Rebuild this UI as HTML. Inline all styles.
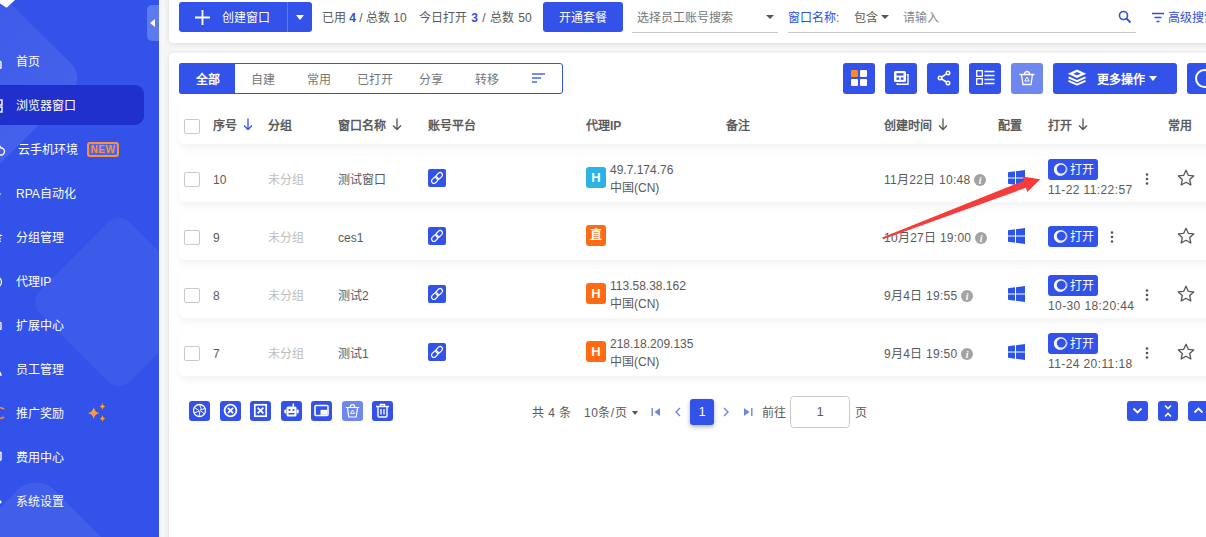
<!DOCTYPE html>
<html lang="zh-CN">
<head>
<meta charset="utf-8">
<title>浏览器窗口</title>
<style>
*{box-sizing:border-box;margin:0;padding:0}
html,body{width:1206px;height:537px;overflow:hidden}
body{font-family:"Liberation Sans",sans-serif;font-size:12px;color:#5a5a5a;background:#f5f5f5;position:relative}
.abs{position:absolute}
.t{position:absolute;white-space:nowrap;line-height:16px}
/* sidebar */
#side{position:absolute;left:0;top:0;width:159px;height:537px;background:#3252e9;overflow:hidden}
#side .shape{position:absolute;background:rgba(255,255,255,.07);border-radius:14px;transform:rotate(45deg)}
#side .act{position:absolute;left:-10px;top:85px;width:154px;height:40px;background:#1f30cc;border-radius:9px}
#side .mi{position:absolute;left:16px;color:#fff;font-size:12px;line-height:16px;white-space:nowrap}
#side .sic{position:absolute;left:-3px;overflow:hidden}
#handle{position:absolute;left:147px;top:5px;width:12px;height:36px;background:#5f79ee;border-radius:5px 0 0 5px}
#handle:after{content:"";position:absolute;left:3px;top:14px;border:4px solid transparent;border-right:5px solid #fff;border-left:0}
.new{position:absolute;left:87px;top:142px;width:32px;height:15px;border:2px solid #ff8f35;border-radius:3px;color:#ff8f35;font-size:10px;font-weight:bold;line-height:11px;text-align:center;letter-spacing:.5px;background:rgba(255,255,255,.12)}
/* cards */
.card{position:absolute;background:#fff;border-radius:4px;box-shadow:0 1px 5px rgba(0,0,0,.10)}
.btn{position:absolute;background:#3252e9;border-radius:3px;color:#fff}
.blue{color:#2f4fe0}
.row{position:absolute;left:179px;width:1040px;height:48px;background:#fff;border-radius:6px;box-shadow:0 4px 9px rgba(0,0,0,.05)}
.cb{position:absolute;left:184px;width:16px;height:15px;margin-top:1px;border:1px solid #c9c9c9;border-radius:2px;background:#fff}
.gray{color:#bdbdbd}
.hd{font-weight:bold;color:#5c5c5c}
.ts{letter-spacing:.4px}
.dt{letter-spacing:.27px}
</style>
</head>
<body>
<!-- SIDEBAR -->
<div id="side">
  <div class="shape" style="left:-156px;top:-22px;width:200px;height:200px;border-radius:20px;background:linear-gradient(270deg,rgba(255,255,255,.09),rgba(255,255,255,.03))"></div>
  <div class="shape" style="left:55px;top:238px;width:128px;height:128px;border-radius:16px;background:rgba(255,255,255,.055)"></div>
  <div class="shape" style="left:-64px;top:513px;width:200px;height:200px;border-radius:26px;background:rgba(255,255,255,.07)"></div>
  <svg style="position:absolute;left:0;top:0" width="20" height="10" viewBox="0 0 20 10"><path d="M0 0h15L7.500 7Q6.500 8 5.500 7L0 3.500z" fill="#fff"/></svg>
  <div class="act"></div>

  <svg class="sic" style="top:55px" width="8" height="14" viewBox="0 0 8 14"><path d="M-4 1l8 6v6h-8" stroke="#fff" stroke-width="1.400" fill="none"/></svg>
  <svg class="sic" style="top:99px" width="8" height="14" viewBox="0 0 8 14"><rect x="-4" y="1" width="9" height="5" stroke="#fff" stroke-width="1.400" fill="none"/><rect x="-4" y="8" width="9" height="5" stroke="#fff" stroke-width="1.400" fill="none"/></svg>
  <svg class="sic" style="top:143px" width="10" height="14" viewBox="0 0 10 14"><path d="M-4 12h8a3.500 3.500 0 0 0 0-7a5 5 0 0 0-4-3.500" stroke="#fff" stroke-width="1.300" fill="none"/></svg>
  <svg class="sic" style="top:187px" width="8" height="14" viewBox="0 0 8 14"><path d="M-2 3h4v2.500a1.600 1.600 0 0 1 0 3.200v2.500h-6z" fill="#fff"/></svg>
  <svg class="sic" style="top:231px" width="8" height="14" viewBox="0 0 8 14"><path d="M-3 2l7 2.500-7 2.500M4 7.500l-7 2.500M4 10l-7 2.500" stroke="#fff" stroke-width="1.300" fill="none"/></svg>
  <svg class="sic" style="top:275px" width="8" height="14" viewBox="0 0 8 14"><circle cx="-1" cy="7" r="5.500" stroke="#fff" stroke-width="1.300" fill="none"/></svg>
  <svg class="sic" style="top:319px" width="8" height="14" viewBox="0 0 8 14"><path d="M-2 1l6 3v6l-6 3" stroke="#fff" stroke-width="1.300" fill="none"/></svg>
  <svg class="sic" style="top:363px" width="8" height="14" viewBox="0 0 8 14"><path d="M-1 8c3 0 5 2 5 5" stroke="#fff" stroke-width="1.400" fill="none"/></svg>
  <svg class="sic" style="top:406px" width="8" height="14" viewBox="0 0 8 14"><path d="M7 3.200a5.200 5.200 0 1 0 0 7.600" stroke="#ff8a3a" stroke-width="1.800" fill="none"/></svg>
  <svg class="sic" style="top:451px" width="8" height="14" viewBox="0 0 8 14"><path d="M-3 1.500h7v7l-4 3.500h-3" stroke="#fff" stroke-width="1.400" fill="none"/></svg>
  <svg class="sic" style="top:495px" width="8" height="14" viewBox="0 0 8 14"><path d="M-2 1l6 6-6 6" stroke="#fff" stroke-width="1.400" fill="none"/></svg>
  <svg style="position:absolute;left:86px;top:402px" width="22" height="22" viewBox="0 0 20 20"><path d="M7 4.500Q7.800 9.300 12.500 10Q7.800 10.700 7 15.500Q6.200 10.700 1.500 10Q6.200 9.300 7 4.500zM15 0.800Q15.400 3.600 18 4Q15.400 4.400 15 7.200Q14.600 4.400 12 4Q14.600 3.600 15 0.800zM15 12Q15.400 14.600 17.800 15Q15.400 15.400 15 18Q14.600 15.400 12.200 15Q14.600 14.600 15 12z" fill="#ff9a3c"/></svg>
  <div class="mi" style="top:54px">首页</div>
  <div class="mi" style="top:98px">浏览器窗口</div>
  <div class="mi" style="top:142px;left:18px">云手机环境</div>
  <div class="new">NEW</div>
  <div class="mi" style="top:186px">RPA自动化</div>
  <div class="mi" style="top:230px">分组管理</div>
  <div class="mi" style="top:274px">代理IP</div>
  <div class="mi" style="top:318px">扩展中心</div>
  <div class="mi" style="top:362px">员工管理</div>
  <div class="mi" style="top:406px">推广奖励</div>
  <div class="mi" style="top:450px">费用中心</div>
  <div class="mi" style="top:494px">系统设置</div>
</div>
<div id="handle"></div>

<!-- TOP BAR -->
<div class="card" style="left:169px;top:-10px;width:1060px;height:53px"></div>
<div class="btn" style="left:179px;top:2px;width:133px;height:30px"></div>
<div class="abs" style="left:287px;top:2px;width:1px;height:30px;background:#5d77ee"></div>
<svg class="abs" style="left:194px;top:9px" width="17" height="17" viewBox="0 0 17 17"><path d="M8.5 1v15M1 8.500h15" stroke="#fff" stroke-width="1.8" fill="none"/></svg>
<div class="t" style="left:222px;top:10px;color:#fff;font-size:12px">创建窗口</div>
<div class="abs" style="left:296px;top:15px;border:4px solid transparent;border-top:5px solid #fff;border-bottom:0"></div>
<div class="t" style="left:322px;top:10px;font-size:12px">已用 <b class="blue">4</b> / 总数 10</div>
<div class="t" style="left:419px;top:10px;font-size:12px;word-spacing:1px">今日打开 <b class="blue">3</b> / 总数 50</div>
<div class="btn" style="left:543px;top:2px;width:80px;height:30px"></div>
<div class="t" style="left:559px;top:10px;color:#fff;font-size:12px">开通套餐</div>
<div class="t" style="left:637px;top:10px;font-size:12px;color:#777">选择员工账号搜索</div>
<div class="abs" style="left:766px;top:15px;border:4px solid transparent;border-top:4px solid #555;border-bottom:0"></div>
<div class="abs" style="left:632px;top:32px;width:146px;height:1px;background:#c8c8c8"></div>
<div class="t blue" style="left:788px;top:10px;font-size:12px">窗口名称:</div>
<div class="t" style="left:854px;top:10px;font-size:12px">包含</div>
<div class="abs" style="left:881px;top:15px;border:4px solid transparent;border-top:4px solid #555;border-bottom:0"></div>
<div class="t" style="left:903px;top:10px;font-size:12px;color:#888">请输入</div>
<div class="abs" style="left:788px;top:32px;width:348px;height:1px;background:#c8c8c8"></div>
<svg class="abs" style="left:1117px;top:9px" width="16" height="16" viewBox="0 0 16 16"><circle cx="6.500" cy="6.500" r="4" stroke="#2f4fe0" stroke-width="1.600" fill="none"/><path d="M9.500 9.500l4 4" stroke="#2f4fe0" stroke-width="1.800"/></svg>
<svg class="abs" style="left:1152px;top:12px" width="14" height="12" viewBox="0 0 14 12"><path d="M0 1.500h12M2.500 5.500h7M4.500 9.500h3" stroke="#2f4fe0" stroke-width="1.400"/></svg>
<div class="t blue" style="left:1168px;top:10px;font-size:12px">高级搜索</div>

<!-- MAIN CARD -->
<div class="card" style="left:169px;top:53px;width:1060px;height:500px"></div>
<!-- tabs -->
<div class="abs" style="left:179px;top:63px;width:384px;height:31px;border:1px solid #3252e9;border-radius:3px;background:#fff"></div>
<div class="abs" style="left:179px;top:63px;width:56px;height:31px;background:#3252e9;border-radius:3px 0 0 3px"></div>
<div class="t" style="left:195.500px;top:72px;color:#fff;font-weight:bold">全部</div>
<div class="t" style="left:251px;top:72px;color:#777">自建</div>
<div class="t" style="left:307px;top:72px;color:#777">常用</div>
<div class="t" style="left:357px;top:72px;color:#777">已打开</div>
<div class="t" style="left:419px;top:72px;color:#777">分享</div>
<div class="t" style="left:475px;top:72px;color:#777">转移</div>
<svg class="abs" style="left:532px;top:73px" width="14" height="11" viewBox="0 0 14 11"><path d="M0 1h13M0 5h9M0 9h5" stroke="#4a67ec" stroke-width="1.500"/></svg>
<!-- toolbar buttons -->
<div class="btn" style="left:843px;top:63px;width:32px;height:31px"></div>
<svg class="abs" style="left:851px;top:70px" width="16" height="16" viewBox="0 0 16 16"><rect x="0" y="0" width="7" height="7" rx="1" fill="#ff8a1f"/><rect x="9" y="0" width="7" height="7" rx="1" fill="#fff"/><rect x="0" y="9" width="7" height="7" rx="1" fill="#fff"/><rect x="9" y="9" width="7" height="7" rx="1" fill="#fff"/></svg>
<div class="btn" style="left:885px;top:63px;width:32px;height:31px"></div>
<svg class="abs" style="left:894px;top:71px" width="16" height="15" viewBox="0 0 16 15"><rect x="0" y="0" width="12" height="11" rx="1.600" fill="#fff"/><rect x="2.500" y="2.200" width="7" height="2.400" fill="#3252e9"/><rect x="2.500" y="6.500" width="2.700" height="2.300" fill="#3252e9"/><rect x="6.800" y="6.500" width="2.700" height="2.300" fill="#3252e9"/><path d="M12.500 3.600h1.500v9.700h-10.800v-1.300" stroke="#fff" stroke-width="1.400" fill="none"/></svg>
<div class="btn" style="left:927px;top:63px;width:32px;height:31px"></div>
<svg class="abs" style="left:937px;top:70px" width="15" height="16" viewBox="0 0 15 16"><path d="M11 3L3 8l8 5" stroke="#fff" stroke-width="1.600" fill="none"/><circle cx="11" cy="3" r="2.500" fill="#fff"/><circle cx="3" cy="8" r="2.500" fill="#fff"/><circle cx="11" cy="13" r="2.500" fill="#fff"/><circle cx="11" cy="3" r="0.900" fill="#3252e9"/><circle cx="3" cy="8" r="0.900" fill="#3252e9"/><circle cx="11" cy="13" r="0.900" fill="#3252e9"/></svg>
<div class="btn" style="left:969px;top:63px;width:32px;height:31px"></div>
<svg class="abs" style="left:976px;top:70px" width="19" height="16" viewBox="0 0 19 16"><rect x="0.700" y="0.700" width="5.600" height="5.600" stroke="#fff" stroke-width="1.300" fill="none"/><rect x="0.700" y="8.700" width="5.600" height="5.600" stroke="#fff" stroke-width="1.300" fill="none"/><path d="M8.500 1.500h10M8.500 5.500h10M8.500 9.500h10M8.500 13.500h10" stroke="#fff" stroke-width="1.300"/></svg>
<div class="btn" style="left:1011px;top:63px;width:32px;height:31px;background:#6f88ef"></div>
<svg class="abs" style="left:1019px;top:70px" width="16" height="16" viewBox="0 0 16 16"><path d="M0.500 4.500h15M2.500 4.500l1.500 10h8l1.500-10M5.500 4.200c0-3.600 5-3.600 5 0" stroke="#fff" stroke-width="1.300" fill="none"/><path d="M8 7l2.200 4h-4.400z" stroke="#fff" stroke-width="1" fill="none"/></svg>
<div class="btn" style="left:1053px;top:63px;width:124px;height:31px"></div>
<svg class="abs" style="left:1067px;top:69px" width="20" height="17" viewBox="0 0 20 17"><path fill-rule="evenodd" d="M10 0.500L0.800 4.700 10 8.900 19.200 4.700zM10 3.100L13.800 4.700 10 6.300 6.200 4.700z" fill="#fff"/><path d="M1.500 8.300L10 12.100 18.500 8.300M1.500 11.800L10 15.600 18.500 11.800" stroke="#fff" stroke-width="2" fill="none" stroke-linejoin="round"/></svg>
<div class="t" style="left:1097px;top:72px;color:#fff;font-size:12px;font-weight:bold;letter-spacing:-.15px">更多操作</div>
<div class="abs" style="left:1149px;top:76px;border:4px solid transparent;border-top:5px solid #fff;border-bottom:0"></div>
<div class="btn" style="left:1187px;top:63px;width:40px;height:31px"></div>
<div class="abs" style="left:1195px;top:69px;width:19px;height:19px;border:2px solid #fff;border-radius:50%"></div>

<!--TABLE_S-->
<div class="row" style="top:104px;height:40px"></div>
<div class="cb" style="top:118px"></div>
<div class="t hd" style="left:213px;top:118px">序号</div>
<div class="t hd" style="left:268px;top:118px">分组</div>
<div class="t hd" style="left:338px;top:118px">窗口名称</div>
<div class="t hd" style="left:428px;top:118px">账号平台</div>
<div class="t hd" style="left:586px;top:118px">代理IP</div>
<div class="t hd" style="left:726px;top:118px">备注</div>
<div class="t hd" style="left:884px;top:118px">创建时间</div>
<div class="t hd" style="left:998px;top:118px">配置</div>
<div class="t hd" style="left:1048px;top:118px">打开</div>
<div class="t hd" style="left:1168px;top:118px">常用</div>
<svg class="abs" style="left:243px;top:118px" width="10" height="13" viewBox="0 0 10 13"><path d="M5 0.500v11M1 7.500l4 4 4-4" stroke="#3252e9" stroke-width="1.300" fill="none"/></svg>
<svg class="abs" style="left:392px;top:118px" width="10" height="13" viewBox="0 0 10 13"><path d="M5 0.500v11M1 7.500l4 4 4-4" stroke="#555" stroke-width="1.300" fill="none"/></svg>
<svg class="abs" style="left:938px;top:118px" width="10" height="13" viewBox="0 0 10 13"><path d="M5 0.500v11M1 7.500l4 4 4-4" stroke="#555" stroke-width="1.300" fill="none"/></svg>
<svg class="abs" style="left:1078px;top:118px" width="10" height="13" viewBox="0 0 10 13"><path d="M5 0.500v11M1 7.500l4 4 4-4" stroke="#555" stroke-width="1.300" fill="none"/></svg>
<div class="row" style="top:155px;height:47px"></div>
<div class="cb" style="top:171px"></div>
<div class="t" style="left:213px;top:172px">10</div>
<div class="t gray" style="left:268px;top:172px">未分组</div>
<div class="t" style="left:338px;top:172px">测试窗口</div>
<div class="abs" style="left:428px;top:169px;width:18px;height:18px"><svg width="18" height="18" viewBox="0 0 18 18"><rect width="18" height="18" rx="2" fill="#3252e9"/><g transform="rotate(-45 9 9)" stroke="#fff" stroke-width="1.100" fill="none"><rect x="2.300" y="6.700" width="7.400" height="4.600" rx="2.300"/><rect x="8.300" y="6.700" width="7.400" height="4.600" rx="2.300"/></g></svg></div>
<div class="abs" style="left:586px;top:167px;width:20px;height:21px;background:#2bb3e6;border-radius:3px;color:#fff;font-weight:bold;font-size:13px;line-height:21px;text-align:center">H</div>
<div class="t" style="left:610px;top:162px">49.7.174.76</div>
<div class="t" style="left:610px;top:180px">中国(CN)</div>
<div class="t dt" style="left:884px;top:172px">11月22日 10:48<span style="display:inline-block;width:12px;height:12px;margin-left:4px;vertical-align:-2px"><svg width="12" height="12" viewBox="0 0 12 12"><circle cx="6" cy="6" r="6" fill="#a3a3a3"/><text x="6.200" y="9.800" font-family="Liberation Serif" font-style="italic" font-weight="bold" font-size="10" fill="#fff" text-anchor="middle">i</text></svg></span></div>
<div class="abs" style="left:1008px;top:170px;width:17px;height:16px"><svg width="17" height="16" viewBox="0 0 17 16"><path d="M0 2.300L7 1.300V7.500H0zM8 1.150L17 0V7.500H8zM0 8.500H7V14.700L0 13.700zM8 8.500H17V16L8 14.850z" fill="#2d54e8"/></svg></div>
<div class="btn" style="left:1048px;top:159px;width:50px;height:21px"></div>
<div class="abs" style="left:1053px;top:162px;width:15px;height:15px"><svg width="15" height="15" viewBox="0 0 15 15"><path fill-rule="evenodd" d="M7.200 1.200a6.300 6.300 0 1 0 0.010 0zM8.300 2.600a4.500 4.500 0 1 1 -0.010 0z" fill="#fff"/><circle cx="8.600" cy="7.300" r="5.400" stroke="#dfe5ff" stroke-width="0.900" fill="none"/></svg></div>
<div class="t" style="left:1070px;top:162px;color:#fff">打开</div>
<div class="t ts" style="left:1048px;top:182px">11-22 11:22:57</div>
<div class="abs" style="left:1145px;top:173px;width:4px;height:12px"><svg width="4" height="12" viewBox="0 0 4 12"><circle cx="2" cy="1.500" r="1.300" fill="#555"/><circle cx="2" cy="6" r="1.300" fill="#555"/><circle cx="2" cy="10.500" r="1.300" fill="#555"/></svg></div>
<div class="abs" style="left:1177px;top:169px;width:18px;height:18px"><svg width="18" height="18" viewBox="0 0 18 18"><path d="M9 1.300l2.300 5 5.400.6-4 3.700 1.100 5.400L9 13.300 4.200 16l1.100-5.400-4-3.700 5.400-.6z" stroke="#555" stroke-width="1.300" fill="none" stroke-linejoin="round"/></svg></div>
<div class="row" style="top:213px;height:47px"></div>
<div class="cb" style="top:229px"></div>
<div class="t" style="left:213px;top:230px">9</div>
<div class="t gray" style="left:268px;top:230px">未分组</div>
<div class="t" style="left:338px;top:230px">ces1</div>
<div class="abs" style="left:428px;top:227px;width:18px;height:18px"><svg width="18" height="18" viewBox="0 0 18 18"><rect width="18" height="18" rx="2" fill="#3252e9"/><g transform="rotate(-45 9 9)" stroke="#fff" stroke-width="1.100" fill="none"><rect x="2.300" y="6.700" width="7.400" height="4.600" rx="2.300"/><rect x="8.300" y="6.700" width="7.400" height="4.600" rx="2.300"/></g></svg></div>
<div class="abs" style="left:586px;top:225px;width:20px;height:21px;background:#ff6a13;border-radius:3px;color:#fff;font-weight:bold;font-size:12px;line-height:21px;text-align:center">直</div>
<div class="t dt" style="left:884px;top:230px">10月27日 19:00<span style="display:inline-block;width:12px;height:12px;margin-left:4px;vertical-align:-2px"><svg width="12" height="12" viewBox="0 0 12 12"><circle cx="6" cy="6" r="6" fill="#a3a3a3"/><text x="6.200" y="9.800" font-family="Liberation Serif" font-style="italic" font-weight="bold" font-size="10" fill="#fff" text-anchor="middle">i</text></svg></span></div>
<div class="abs" style="left:1008px;top:228px;width:17px;height:16px"><svg width="17" height="16" viewBox="0 0 17 16"><path d="M0 2.300L7 1.300V7.500H0zM8 1.150L17 0V7.500H8zM0 8.500H7V14.700L0 13.700zM8 8.500H17V16L8 14.850z" fill="#2d54e8"/></svg></div>
<div class="btn" style="left:1048px;top:226px;width:50px;height:21px"></div>
<div class="abs" style="left:1053px;top:229px;width:15px;height:15px"><svg width="15" height="15" viewBox="0 0 15 15"><path fill-rule="evenodd" d="M7.200 1.200a6.300 6.300 0 1 0 0.010 0zM8.300 2.600a4.500 4.500 0 1 1 -0.010 0z" fill="#fff"/><circle cx="8.600" cy="7.300" r="5.400" stroke="#dfe5ff" stroke-width="0.900" fill="none"/></svg></div>
<div class="t" style="left:1070px;top:229px;color:#fff">打开</div>
<div class="abs" style="left:1110px;top:231px;width:4px;height:12px"><svg width="4" height="12" viewBox="0 0 4 12"><circle cx="2" cy="1.500" r="1.300" fill="#555"/><circle cx="2" cy="6" r="1.300" fill="#555"/><circle cx="2" cy="10.500" r="1.300" fill="#555"/></svg></div>
<div class="abs" style="left:1177px;top:227px;width:18px;height:18px"><svg width="18" height="18" viewBox="0 0 18 18"><path d="M9 1.300l2.300 5 5.400.6-4 3.700 1.100 5.400L9 13.300 4.200 16l1.100-5.400-4-3.700 5.400-.6z" stroke="#555" stroke-width="1.300" fill="none" stroke-linejoin="round"/></svg></div>
<div class="row" style="top:271px;height:47px"></div>
<div class="cb" style="top:287px"></div>
<div class="t" style="left:213px;top:288px">8</div>
<div class="t gray" style="left:268px;top:288px">未分组</div>
<div class="t" style="left:338px;top:288px">测试2</div>
<div class="abs" style="left:428px;top:285px;width:18px;height:18px"><svg width="18" height="18" viewBox="0 0 18 18"><rect width="18" height="18" rx="2" fill="#3252e9"/><g transform="rotate(-45 9 9)" stroke="#fff" stroke-width="1.100" fill="none"><rect x="2.300" y="6.700" width="7.400" height="4.600" rx="2.300"/><rect x="8.300" y="6.700" width="7.400" height="4.600" rx="2.300"/></g></svg></div>
<div class="abs" style="left:586px;top:283px;width:20px;height:21px;background:#ff6a13;border-radius:3px;color:#fff;font-weight:bold;font-size:13px;line-height:21px;text-align:center">H</div>
<div class="t" style="left:610px;top:278px">113.58.38.162</div>
<div class="t" style="left:610px;top:296px">中国(CN)</div>
<div class="t dt" style="left:884px;top:288px">9月4日 19:55<span style="display:inline-block;width:12px;height:12px;margin-left:4px;vertical-align:-2px"><svg width="12" height="12" viewBox="0 0 12 12"><circle cx="6" cy="6" r="6" fill="#a3a3a3"/><text x="6.200" y="9.800" font-family="Liberation Serif" font-style="italic" font-weight="bold" font-size="10" fill="#fff" text-anchor="middle">i</text></svg></span></div>
<div class="abs" style="left:1008px;top:286px;width:17px;height:16px"><svg width="17" height="16" viewBox="0 0 17 16"><path d="M0 2.300L7 1.300V7.500H0zM8 1.150L17 0V7.500H8zM0 8.500H7V14.700L0 13.700zM8 8.500H17V16L8 14.850z" fill="#2d54e8"/></svg></div>
<div class="btn" style="left:1048px;top:275px;width:50px;height:21px"></div>
<div class="abs" style="left:1053px;top:278px;width:15px;height:15px"><svg width="15" height="15" viewBox="0 0 15 15"><path fill-rule="evenodd" d="M7.200 1.200a6.300 6.300 0 1 0 0.010 0zM8.300 2.600a4.500 4.500 0 1 1 -0.010 0z" fill="#fff"/><circle cx="8.600" cy="7.300" r="5.400" stroke="#dfe5ff" stroke-width="0.900" fill="none"/></svg></div>
<div class="t" style="left:1070px;top:278px;color:#fff">打开</div>
<div class="t ts" style="left:1048px;top:298px">10-30 18:20:44</div>
<div class="abs" style="left:1145px;top:289px;width:4px;height:12px"><svg width="4" height="12" viewBox="0 0 4 12"><circle cx="2" cy="1.500" r="1.300" fill="#555"/><circle cx="2" cy="6" r="1.300" fill="#555"/><circle cx="2" cy="10.500" r="1.300" fill="#555"/></svg></div>
<div class="abs" style="left:1177px;top:285px;width:18px;height:18px"><svg width="18" height="18" viewBox="0 0 18 18"><path d="M9 1.300l2.300 5 5.400.6-4 3.700 1.100 5.400L9 13.300 4.200 16l1.100-5.400-4-3.700 5.400-.6z" stroke="#555" stroke-width="1.300" fill="none" stroke-linejoin="round"/></svg></div>
<div class="row" style="top:329px;height:47px"></div>
<div class="cb" style="top:345px"></div>
<div class="t" style="left:213px;top:346px">7</div>
<div class="t gray" style="left:268px;top:346px">未分组</div>
<div class="t" style="left:338px;top:346px">测试1</div>
<div class="abs" style="left:428px;top:343px;width:18px;height:18px"><svg width="18" height="18" viewBox="0 0 18 18"><rect width="18" height="18" rx="2" fill="#3252e9"/><g transform="rotate(-45 9 9)" stroke="#fff" stroke-width="1.100" fill="none"><rect x="2.300" y="6.700" width="7.400" height="4.600" rx="2.300"/><rect x="8.300" y="6.700" width="7.400" height="4.600" rx="2.300"/></g></svg></div>
<div class="abs" style="left:586px;top:341px;width:20px;height:21px;background:#ff6a13;border-radius:3px;color:#fff;font-weight:bold;font-size:13px;line-height:21px;text-align:center">H</div>
<div class="t" style="left:610px;top:336px">218.18.209.135</div>
<div class="t" style="left:610px;top:354px">中国(CN)</div>
<div class="t dt" style="left:884px;top:346px">9月4日 19:50<span style="display:inline-block;width:12px;height:12px;margin-left:4px;vertical-align:-2px"><svg width="12" height="12" viewBox="0 0 12 12"><circle cx="6" cy="6" r="6" fill="#a3a3a3"/><text x="6.200" y="9.800" font-family="Liberation Serif" font-style="italic" font-weight="bold" font-size="10" fill="#fff" text-anchor="middle">i</text></svg></span></div>
<div class="abs" style="left:1008px;top:344px;width:17px;height:16px"><svg width="17" height="16" viewBox="0 0 17 16"><path d="M0 2.300L7 1.300V7.500H0zM8 1.150L17 0V7.500H8zM0 8.500H7V14.700L0 13.700zM8 8.500H17V16L8 14.850z" fill="#2d54e8"/></svg></div>
<div class="btn" style="left:1048px;top:333px;width:50px;height:21px"></div>
<div class="abs" style="left:1053px;top:336px;width:15px;height:15px"><svg width="15" height="15" viewBox="0 0 15 15"><path fill-rule="evenodd" d="M7.200 1.200a6.300 6.300 0 1 0 0.010 0zM8.300 2.600a4.500 4.500 0 1 1 -0.010 0z" fill="#fff"/><circle cx="8.600" cy="7.300" r="5.400" stroke="#dfe5ff" stroke-width="0.900" fill="none"/></svg></div>
<div class="t" style="left:1070px;top:336px;color:#fff">打开</div>
<div class="t ts" style="left:1048px;top:356px">11-24 20:11:18</div>
<div class="abs" style="left:1145px;top:347px;width:4px;height:12px"><svg width="4" height="12" viewBox="0 0 4 12"><circle cx="2" cy="1.500" r="1.300" fill="#555"/><circle cx="2" cy="6" r="1.300" fill="#555"/><circle cx="2" cy="10.500" r="1.300" fill="#555"/></svg></div>
<div class="abs" style="left:1177px;top:343px;width:18px;height:18px"><svg width="18" height="18" viewBox="0 0 18 18"><path d="M9 1.300l2.300 5 5.400.6-4 3.700 1.100 5.400L9 13.300 4.200 16l1.100-5.400-4-3.700 5.400-.6z" stroke="#555" stroke-width="1.300" fill="none" stroke-linejoin="round"/></svg></div>
<!--TABLE_E-->
<!--FOOTER_S-->
<div class="btn" style="left:189px;top:401px;width:21px;height:20px;background:#3252e9"></div>
<svg class="abs" style="left:192px;top:403px" width="15" height="15" viewBox="0 0 15 15"><circle cx="7.500" cy="7.500" r="6" stroke="#fff" fill="none" stroke-width="1.300"/><path d="M7.500 1.500l2 5M13 5.500l-5 1.500M12.500 11l-4-3.500M7 13.500l1-5.500M2 10l5.500-2M2.500 4.500l4.500 3" stroke="#fff" fill="none" stroke-width="1"/></svg>
<div class="btn" style="left:220px;top:401px;width:21px;height:20px;background:#3252e9"></div>
<svg class="abs" style="left:223px;top:403px" width="15" height="15" viewBox="0 0 15 15"><circle cx="7.500" cy="7.500" r="5.900" stroke="#fff" fill="none" stroke-width="1.900"/><path d="M4.900 4.900l5.200 5.200M10.100 4.900l-5.200 5.200" stroke="#fff" fill="none" stroke-width="1.800"/></svg>
<div class="btn" style="left:250px;top:401px;width:21px;height:20px;background:#3252e9"></div>
<svg class="abs" style="left:253px;top:403px" width="15" height="15" viewBox="0 0 15 15"><rect x="1.800" y="1.800" width="11.400" height="11.400" stroke="#fff" fill="none" stroke-width="1.700"/><path d="M4.600 4.600l5.800 5.800M10.400 4.600l-5.800 5.800" stroke="#fff" fill="none" stroke-width="1.800"/></svg>
<div class="btn" style="left:281px;top:401px;width:21px;height:20px;background:#3252e9"></div>
<svg class="abs" style="left:284px;top:403px" width="15" height="15" viewBox="0 0 15 15"><rect x="8.500" y="0.600" width="1.600" height="3" fill="#fff"/><rect x="2.500" y="3.500" width="10" height="10" rx="1.500" fill="#fff"/><rect x="0.300" y="6.500" width="2" height="4" rx="1" fill="#fff"/><rect x="12.700" y="6.500" width="2" height="4" rx="1" fill="#fff"/><circle cx="5.500" cy="7" r="1.100" fill="#3252e9"/><circle cx="9.500" cy="7" r="1.100" fill="#3252e9"/><rect x="4.500" y="10" width="6" height="1.500" fill="#3252e9"/></svg>
<div class="btn" style="left:311px;top:401px;width:21px;height:20px;background:#3252e9"></div>
<svg class="abs" style="left:314px;top:403px" width="15" height="15" viewBox="0 0 15 15"><rect x="1" y="2.500" width="13" height="10" rx="1" stroke="#fff" fill="none" stroke-width="1.600"/><rect x="6.500" y="6.800" width="6.500" height="5" fill="#fff"/></svg>
<div class="btn" style="left:342px;top:401px;width:21px;height:20px;background:#6f88ef"></div>
<svg class="abs" style="left:345px;top:403px" width="15" height="15" viewBox="0 0 15 15"><path d="M0.800 4.500h13.400M2.500 4.500l1.300 9.500h7.400l1.300-9.500M5.300 4.200c0-3.400 4.400-3.400 4.400 0" stroke="#fff" fill="none" stroke-width="1.200"/><path d="M7.500 7l2 3.600h-4z" stroke="#fff" fill="none" stroke-width="0.900"/></svg>
<div class="btn" style="left:372px;top:401px;width:21px;height:20px;background:#3252e9"></div>
<svg class="abs" style="left:375px;top:403px" width="15" height="15" viewBox="0 0 15 15"><path d="M1 3.500h13M5.500 3.200v-1.700h4v1.700M3 3.500v9.500a1 1 0 0 0 1 1h7a1 1 0 0 0 1-1v-9.500" stroke="#fff" fill="none" stroke-width="1.400"/><path d="M6 6v5.500M9 6v5.500" stroke="#fff" fill="none" stroke-width="1.300"/></svg>
<div class="t" style="left:532px;top:405px;word-spacing:1px">共 4 条</div>
<div class="t" style="left:584px;top:405px;letter-spacing:.5px">10条/页</div>
<div class="abs" style="left:632px;top:411px;border:3.500px solid transparent;border-top:4px solid #555;border-bottom:0"></div>
<svg class="abs" style="left:651px;top:407px" width="10" height="10" viewBox="0 0 10 10"><path d="M1.200 1v8" stroke="#6a84ef" stroke-width="1.400"/><path d="M9 1v8l-5.500-4z" fill="#6a84ef"/></svg>
<svg class="abs" style="left:674px;top:407px" width="8" height="10" viewBox="0 0 8 10"><path d="M6 1l-4 4 4 4" stroke="#6a84ef" stroke-width="1.400" fill="none"/></svg>
<div class="abs" style="left:690px;top:399px;width:24px;height:26px;background:#3252e9;border-radius:3px;box-shadow:0 2px 4px rgba(0,0,0,.3);color:#fff;text-align:center;line-height:26px;font-size:13px">1</div>
<svg class="abs" style="left:722px;top:407px" width="8" height="10" viewBox="0 0 8 10"><path d="M2 1l4 4-4 4" stroke="#6a84ef" stroke-width="1.400" fill="none"/></svg>
<svg class="abs" style="left:743px;top:407px" width="10" height="10" viewBox="0 0 10 10"><path d="M8.800 1v8" stroke="#6a84ef" stroke-width="1.400"/><path d="M1 1v8l5.500-4z" fill="#6a84ef"/></svg>
<div class="t" style="left:762px;top:405px">前往</div>
<div class="abs" style="left:790px;top:396px;width:60px;height:32px;border:1px solid #c9c9c9;border-radius:4px;background:#fff;text-align:center;line-height:30px;font-size:13px">1</div>
<div class="t" style="left:855px;top:405px">页</div>
<div class="btn" style="left:1127px;top:401px;width:21px;height:20px"></div>
<svg class="abs" style="left:1132px;top:407px" width="11" height="8" viewBox="0 0 11 8"><path d="M1.500 1.500l4 4 4-4" stroke="#fff" stroke-width="1.800" fill="none"/></svg>
<div class="btn" style="left:1158px;top:401px;width:20px;height:20px"></div>
<svg class="abs" style="left:1163px;top:404px" width="10" height="14" viewBox="0 0 10 14"><path d="M2 1.500l3 3 3-3M2 12.500l3-3 3 3" stroke="#fff" stroke-width="1.700" fill="none"/></svg>
<div class="btn" style="left:1188px;top:401px;width:30px;height:20px"></div>
<svg class="abs" style="left:1193px;top:406px" width="11" height="8" viewBox="0 0 11 8"><path d="M1.500 6.500l4-4 4 4" stroke="#fff" stroke-width="1.800" fill="none"/></svg>
<!--FOOTER_E-->
<!--ARROW_S-->
<svg class="abs" style="left:0;top:0;pointer-events:none" width="1206" height="537" viewBox="0 0 1206 537"><path d="M882.200 237.600L1024.200 180.600L1022.100 176.600L1040.300 179.300L1027.300 192L1025.900 187.800L883 239.200Z" fill="#f63b3b"/></svg>
<!--ARROW_E-->
</body>
</html>
